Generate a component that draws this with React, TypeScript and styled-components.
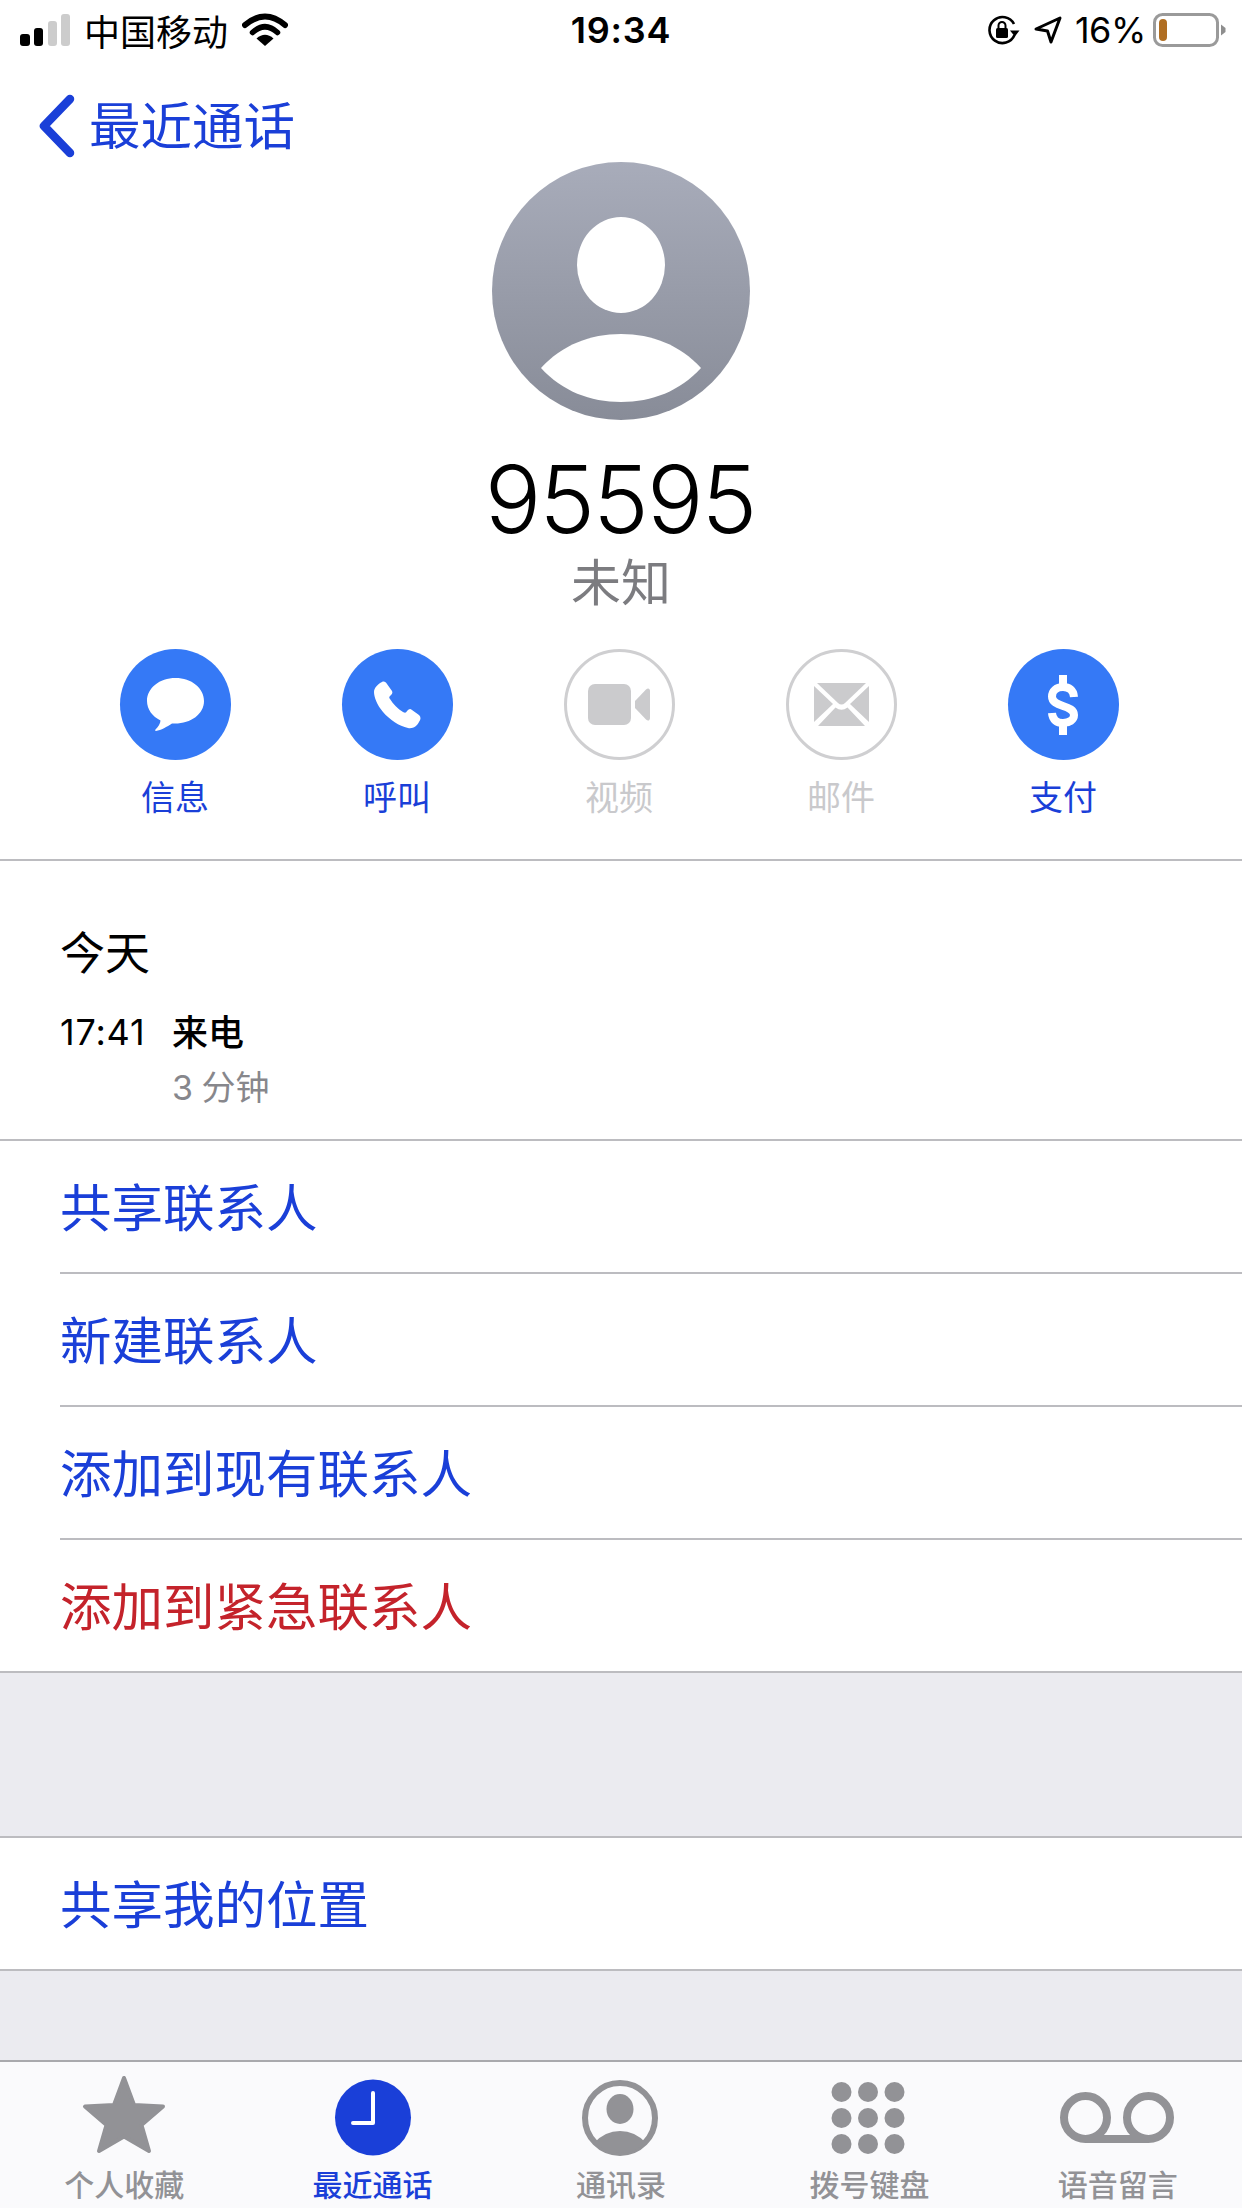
import React from "react";
import styled, { createGlobalStyle } from "styled-components";

const CJK = `"Noto Sans CJK SC", sans-serif`;
const LATIN = `Inter, "Noto Sans CJK SC", sans-serif`;
const BLUE = "#1a3fd8";
const RED = "#c4232b";
const LINE = "#bcbcc0";

const Global = createGlobalStyle`
  html, body { margin: 0; padding: 0; background: #fff; }
  body { font-family: ${CJK}; -webkit-font-smoothing: antialiased; }
`;

const Page = styled.div`
  width: 1242px;
  height: 2208px;
  display: flex;
  flex-direction: column;
  overflow: hidden;
  background: #ebebf0;
`;

const Top = styled.div`
  background: #fff;
`;

const StatusBar = styled.div`
  height: 60px;
  padding: 0 16px 0 20px;
  display: grid;
  grid-template-columns: 1fr auto 1fr;
  align-items: center;
  color: #000;
`;

const StatusLeft = styled.div`
  display: flex;
  align-items: center;
  gap: 14px;
`;

const Carrier = styled.span`
  font: 400 36px/44px ${CJK};
`;

const Clock = styled.span`
  margin-right: 4px;
  font: 600 36px/44px ${LATIN};
  letter-spacing: 0.8px;
`;

const StatusRight = styled.div`
  display: flex;
  align-items: center;
  justify-content: flex-end;
  gap: 13px;
`;

const Percent = styled.span`
  font: 400 36px/44px ${LATIN};
  letter-spacing: -0.4px;
  margin-right: -6px;
`;

const Nav = styled.div`
  height: 72px;
  padding: 30px 0 0 38px;
  display: flex;
  align-items: center;
  gap: 13px;
  color: ${BLUE};
`;

const BackLabel = styled.span`
  font: 400 51.5px/72px ${CJK};
  margin-top: -6px;
`;

const Header = styled.div`
  display: flex;
  flex-direction: column;
  align-items: center;
  padding-bottom: 43px;
  border-bottom: 2px solid ${LINE};
`;

const Name = styled.div`
  margin: 34px 2px 0 0;
  font: 350 94px/90px ${LATIN};
  letter-spacing: -2px;
  color: #000;
`;

const Subtitle = styled.div`
  margin-top: 5px;
  font: 400 50px/60px ${CJK};
  color: #7c7c80;
`;

const Actions = styled.div`
  margin: 40px 4px 0 0;
  width: 1110px;
  display: grid;
  grid-template-columns: repeat(5, 1fr);
`;

const Action = styled.div`
  display: flex;
  flex-direction: column;
  align-items: center;
  gap: 16px;
`;

const ActionCircle = styled.div<{ $on: boolean }>`
  box-sizing: border-box;
  width: 111px;
  height: 111px;
  border-radius: 50%;
  display: flex;
  align-items: center;
  justify-content: center;
  background: ${(p) => (p.$on ? "#3579f6" : "#fff")};
  border: ${(p) => (p.$on ? "none" : "3px solid #cfcfd1")};
`;

const ActionLabel = styled.span<{ $on: boolean }>`
  font: 400 34px/40px ${CJK};
  color: ${(p) => (p.$on ? BLUE : "#c9c9cc")};
`;

const Log = styled.div`
  padding: 65px 0 31px 60px;
  border-bottom: 2px solid ${LINE};
`;

const LogDay = styled.div`
  font: 400 45px/50px ${CJK};
  color: #000;
`;

const LogRow = styled.div`
  margin-top: 34px;
  display: flex;
`;

const LogTime = styled.div`
  width: 112px;
  font: 400 36px/44px ${LATIN};
  letter-spacing: 0.8px;
  color: #000;
`;

const LogCall = styled.div`
  display: flex;
  flex-direction: column;
  gap: 18px;
`;

const LogType = styled.div`
  font: 500 36px/40px ${CJK};
  color: #000;
`;

const LogDuration = styled.div`
  font: 400 34px/40px ${LATIN};
  word-spacing: -1px;
  color: #87878c;
`;

const Group = styled.div`
  background: #fff;
  border-bottom: 2px solid ${LINE};
`;

const SoloGroup = styled(Group)`
  margin-top: 163px;
  border-top: 2px solid ${LINE};
`;

const Row = styled.div<{ $danger?: boolean; $last?: boolean }>`
  box-sizing: border-box;
  margin-left: 60px;
  padding-bottom: 4px;
  height: ${(p) => (p.$last ? "131px" : "133px")};
  display: flex;
  align-items: center;
  font: 400 51.5px/60px ${CJK};
  color: ${(p) => (p.$danger ? RED : BLUE)};
  border-bottom: ${(p) => (p.$last ? "none" : `2px solid ${LINE}`)};
`;

const Spacer = styled.div`
  flex: 1;
`;

const TabBar = styled.div`
  height: 148px;
  box-sizing: border-box;
  border-top: 2px solid #a9a9ad;
  background: #fafafc;
  display: grid;
  grid-template-columns: repeat(5, 1fr);
`;

const Tab = styled.div<{ $on?: boolean }>`
  padding-top: 10px;
  display: flex;
  flex-direction: column;
  align-items: center;
  color: ${(p) => (p.$on ? BLUE : "#929296")};
`;

const TabLabel = styled.span`
  margin-top: 3px;
  font: 500 30px/36px ${CJK};
`;

const TabIcon = styled.svg`
  display: block;
  width: 130px;
  height: 90px;
`;

const I: React.FC<{ w: number; h: number; children: React.ReactNode }> = ({ w, h, children }) => (
  <svg width={w} height={h} viewBox={`0 0 ${w} ${h}`} style={{ display: "block" }}>
    {children}
  </svg>
);

const Signal = () => (
  <I w={50} h={33}>
    <rect x={0} y={20} width={10} height={12} rx={3} fill="#000" />
    <rect x={14} y={14} width={9} height={18} rx={3} fill="#000" />
    <rect x={28} y={7} width={9} height={25} rx={3} fill="#ccc" />
    <rect x={41} y={0} width={9} height={32} rx={3} fill="#ccc" />
  </I>
);

const Wifi = () => (
  <I w={46} h={34}>
    <path d="M3 12Q23 -5 43 12" fill="none" stroke="#000" strokeWidth={6} strokeLinecap="round" />
    <path d="M10.5 19.5Q23 8 35.5 19.5" fill="none" stroke="#000" strokeWidth={5.5} strokeLinecap="round" />
    <path d="M23 33L14.5 25.5Q23 18 31.5 25.5Z" fill="#000" />
  </I>
);

const RotationLock = () => (
  <I w={34} h={30}>
    <path d="M27.5 20A13 13 0 1 1 27 9" fill="none" stroke="#000" strokeWidth={2.6} />
    <path d="M23 15.5L32.5 15.5L27.8 21.5Z" fill="#000" />
    <rect x={9} y={13} width={12} height={10} rx={1.5} fill="#000" />
    <path d="M11.5 13V10.5a3.5 3.5 0 0 1 7 0V13" fill="none" stroke="#000" strokeWidth={2} />
  </I>
);

const Location = () => (
  <I w={28} h={28}>
    <path d="M2 13L26 2L17 26L13.5 15Z" fill="none" stroke="#000" strokeWidth={3} strokeLinejoin="round" />
  </I>
);

const Battery = () => (
  <I w={73} h={34}>
    <rect x={1.5} y={1.5} width={63} height={31} rx={8} fill="none" stroke="#9a9a9a" strokeWidth={3} />
    <rect x={6} y={6} width={8} height={22} rx={4} fill="#b06e22" />
    <path d="M68 11.5L72.5 15V19L68 22.5Z" fill="#8e8e8e" />
  </I>
);

const Chevron = () => (
  <I w={38} h={64}>
    <path d="M32 5L6 32L32 59" fill="none" stroke={BLUE} strokeWidth={8.5} strokeLinecap="round" strokeLinejoin="round" />
  </I>
);

const Avatar = () => (
  <svg width={258} height={258} viewBox="0 0 258 258" style={{ display: "block" }}>
    <defs>
      <linearGradient id="avatarFill" x1="0" y1="0" x2="0" y2="1">
        <stop offset="0" stopColor="#a8acba" />
        <stop offset="1" stopColor="#888c98" />
      </linearGradient>
    </defs>
    <circle cx={129} cy={129} r={129} fill="url(#avatarFill)" />
    <ellipse cx={129} cy={103} rx={44} ry={48} fill="#fff" />
    <path d="M49 206C70 183 98 172 129 172C160 172 188 183 209 206C188 229 160 240 129 240C98 240 70 229 49 206Z" fill="#fff" />
  </svg>
);

const Bubble = () => (
  <I w={57} h={54}>
    <path
      d="M28.500 0C44.500 0 57 10 57 23C57 36 44 45.500 28 45.500C26.500 45.500 26 45.400 25 45.600C20 48.800 14 52.500 9 53C8 53 8 52 8.500 51.500C11 49 13.500 45.500 13.500 42.500C5.500 38.500 0 31.500 0 23C0 10 12.500 0 28.500 0Z"
      fill="#fff"
    />
  </I>
);

const Phone = () => (
  <I w={47} h={48}>
    <path
      d="M8 1C10 0 12 1 13 3L18 10C19 12 18 13 16 15C15 16 15 17 16 18C19 23 24 28 29 31C31 32 32 32 33 30C35 28 36 27 38 29L45 34C47 36 47 38 45 41C43 45 39 48 34 47C25 45 16 39 9 31C3 24 0 16 0 11C0 7 4 3 8 1Z"
      fill="#fff"
    />
  </I>
);

const Video = () => (
  <I w={62} h={41}>
    <rect x={0} y={0} width={43} height={41} rx={7} fill="#cbcbcd" />
    <path d="M47 17L58 5.500C60 3.500 62 4.500 62 7V34C62 36.500 60 37.500 58 35.500L47 24Z" fill="#cbcbcd" />
  </I>
);

const Mail = () => (
  <I w={55} h={43}>
    <path d="M3 0H52L31 20Q27.500 23 24 20Z" fill="#cbcbcd" />
    <path d="M0 3V39L19 21Z" fill="#cbcbcd" />
    <path d="M55 3V39L36 21Z" fill="#cbcbcd" />
    <path d="M4 43H51L33.500 24.500Q27.500 29 21.500 24.500Z" fill="#cbcbcd" />
  </I>
);

const DollarIcon = () => (
  <I w={30} h={60}>
    <path
      d="M26 22C25.500 15 21 12 15 12C8.500 12 4 16 4 21.500C4 27 9 29 15 31C21 33 26 35 26 40C26 45 21 48 15 48C9 48 4.500 45 4 38"
      fill="none"
      stroke="#fff"
      strokeWidth={8}
    />
    <rect x={11} y={0} width={8} height={12} fill="#fff" />
    <rect x={11} y={48} width={8} height={12} fill="#fff" />
  </I>
);

const StarIcon = () => (
  <TabIcon viewBox="0 0 130 90">
    <path
      d="M65 6L75 33L104 34.500L82.500 53L90 79L65 64.500L40 79L47.500 53L26 34.500L55 33Z"
      fill="currentColor"
      stroke="currentColor"
      strokeWidth={4}
      strokeLinejoin="round"
    />
  </TabIcon>
);

const ClockIcon = () => (
  <TabIcon viewBox="0 0 130 90">
    <circle cx={65} cy={45.500} r={38} fill="currentColor" />
    <path d="M65 21V51H45" fill="none" stroke="#fff" strokeWidth={4} strokeLinecap="round" strokeLinejoin="round" />
  </TabIcon>
);

const ContactIcon = () => (
  <TabIcon viewBox="1 0 130 90">
    <circle cx={65} cy={46} r={35} fill="none" stroke="currentColor" strokeWidth={6} />
    <ellipse cx={65} cy={37} rx={13.500} ry={15} fill="currentColor" />
    <path d="M39 71Q50 59 65 59Q80 59 91 71Q80 81 65 81Q50 81 39 71Z" fill="currentColor" />
  </TabIcon>
);

const KeypadIcon = () => (
  <TabIcon viewBox="1 0 130 90">
    {[20, 46, 72].map((y) =>
      [38.500, 65, 91.500].map((x) => <circle key={`${x}-${y}`} cx={x} cy={y} r={10} fill="currentColor" />)
    )}
  </TabIcon>
);

const VoicemailIcon = () => (
  <TabIcon viewBox="1 0 130 90">
    <circle cx={33.500} cy={45.500} r={21.500} fill="none" stroke="currentColor" strokeWidth={8} />
    <circle cx={96.500} cy={45.500} r={21.500} fill="none" stroke="currentColor" strokeWidth={8} />
    <rect x={33} y={63} width={64} height={8} fill="currentColor" />
  </TabIcon>
);

const actions = [
  { label: "信息", on: true, icon: <Bubble /> },
  { label: "呼叫", on: true, icon: <Phone /> },
  { label: "视频", on: false, icon: <Video /> },
  { label: "邮件", on: false, icon: <Mail /> },
  { label: "支付", on: true, icon: <DollarIcon /> },
];

const tabs = [
  { label: "个人收藏", icon: <StarIcon /> },
  { label: "最近通话", icon: <ClockIcon />, on: true },
  { label: "通讯录", icon: <ContactIcon /> },
  { label: "拨号键盘", icon: <KeypadIcon /> },
  { label: "语音留言", icon: <VoicemailIcon /> },
];

export default function App() {
  return (
    <Page lang="zh-CN">
      <Global />
      <Top>
        <StatusBar>
          <StatusLeft>
            <Signal />
            <Carrier>中国移动</Carrier>
            <Wifi />
          </StatusLeft>
          <Clock>19:34</Clock>
          <StatusRight>
            <RotationLock />
            <Location />
            <Percent>16%</Percent>
            <Battery />
          </StatusRight>
        </StatusBar>
        <Nav>
          <Chevron />
          <BackLabel>最近通话</BackLabel>
        </Nav>
        <Header>
          <Avatar />
          <Name>95595</Name>
          <Subtitle>未知</Subtitle>
          <Actions>
            {actions.map((a) => (
              <Action key={a.label}>
                <ActionCircle $on={a.on}>{a.icon}</ActionCircle>
                <ActionLabel $on={a.on}>{a.label}</ActionLabel>
              </Action>
            ))}
          </Actions>
        </Header>
        <Log>
          <LogDay>今天</LogDay>
          <LogRow>
            <LogTime>17:41</LogTime>
            <LogCall>
              <LogType>来电</LogType>
              <LogDuration>3 分钟</LogDuration>
            </LogCall>
          </LogRow>
        </Log>
      </Top>
      <Group>
        <Row>共享联系人</Row>
        <Row>新建联系人</Row>
        <Row>添加到现有联系人</Row>
        <Row $danger $last>添加到紧急联系人</Row>
      </Group>
      <SoloGroup>
        <Row $last>共享我的位置</Row>
      </SoloGroup>
      <Spacer />
      <TabBar>
        {tabs.map((t) => (
          <Tab key={t.label} $on={t.on}>
            {t.icon}
            <TabLabel>{t.label}</TabLabel>
          </Tab>
        ))}
      </TabBar>
    </Page>
  );
}
